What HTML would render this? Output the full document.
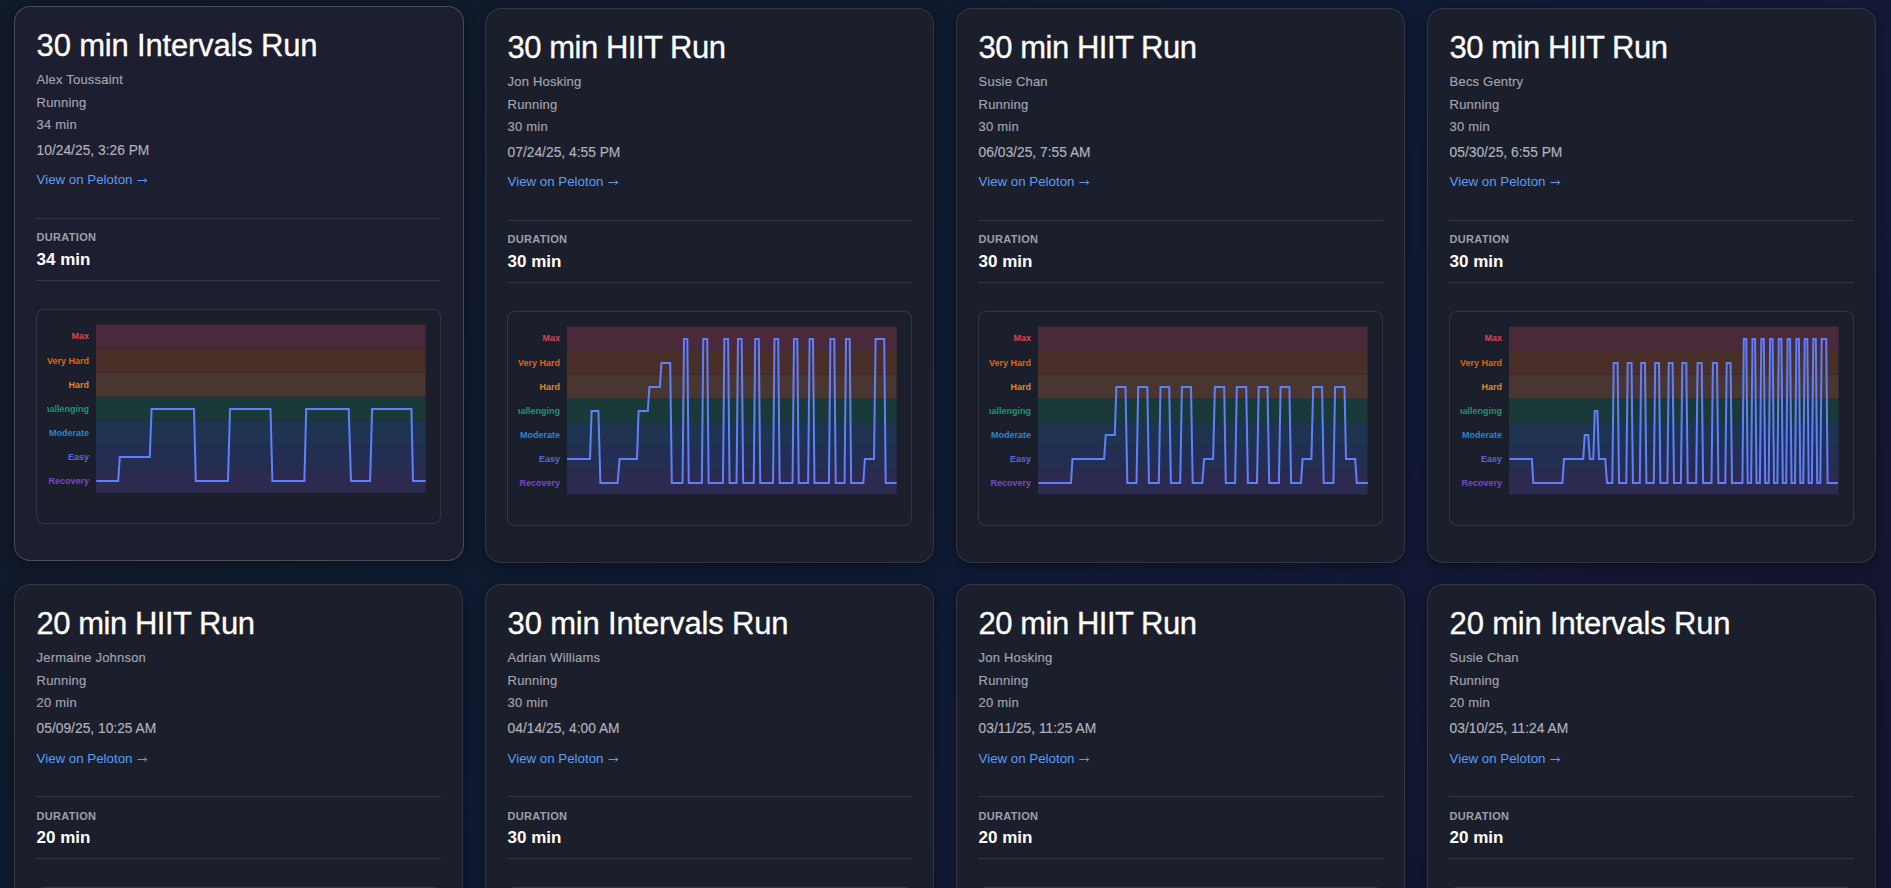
<!DOCTYPE html><html><head><meta charset="utf-8"><style>
*{margin:0;padding:0;box-sizing:border-box}
html,body{width:1891px;height:888px;overflow:hidden}
body{background:linear-gradient(135deg,#111a2b 0%,#111a2c 20%,#0f1a33 52%,#131937 68%,#15142e 100%);font-family:"Liberation Sans",sans-serif;position:relative}
.card{position:absolute;width:449px;height:555px;background:#1b1f2c;border:1px solid rgba(255,255,255,0.1);border-radius:16px;box-shadow:0 4px 14px rgba(0,0,0,0.35)}
.card.hov{width:450px;background:#1d1e2f;border-color:rgba(255,255,255,0.2)}
.card>div{position:absolute;left:21.6px;white-space:nowrap}
.ttl{font-size:31px;line-height:31px;color:#fff;-webkit-text-stroke:0.3px #fff;letter-spacing:-0.45px}
.sub{font-size:13px;line-height:13px;color:#a3a6b0;letter-spacing:0.2px;-webkit-text-stroke:0.15px #a3a6b0}
.date{font-size:13.8px;line-height:13.8px;color:#b0b3bc;-webkit-text-stroke:0.15px #b0b3bc}
.lnk{font-size:13.3px;line-height:13.3px;color:#5b9cf6}
.arr{position:absolute;top:169px}
.lbl{font-size:11px;line-height:11px;color:#9ca0ab;font-weight:700;letter-spacing:0.3px}
.val{font-size:17px;line-height:17px;color:#fff;font-weight:700}
.card>div.hr{left:21px;width:405px;height:1px;background:rgba(255,255,255,0.1)}
.card>div.cbox{left:21px;top:302px;width:405px;height:215px;border:1px solid rgba(255,255,255,0.1);border-radius:8px;background:#1b1f2c}
.csvg{position:absolute;left:-1px;top:-1px}
</style></head><body><div class="card hov" style="left:14px;top:6px"><div class="ttl" style="letter-spacing:-0.18px;top:23.46px">30 min Intervals Run</div><div class="sub" style="top:66.00px">Alex Toussaint</div><div class="sub" style="top:88.60px">Running</div><div class="sub" style="top:111.00px">34 min</div><div class="date" style="top:137.22px">10/24/25, 3:26 PM</div><div class="lnk" style="top:165.74px">View on Peloton</div><svg class="arr" style="top:169px;left:121.5px" width="12" height="8" viewBox="0 0 12 8"><path d="M0.4 4.5H9.6M7.5 2.3L9.7 4.5L7.5 6.7" fill="none" stroke="#5b9cf6" stroke-width="1"/></svg><div class="hr" style="top:211px"></div><div class="lbl" style="top:224.89px">DURATION</div><div class="val" style="top:243.91px">34 min</div><div class="hr" style="top:273px"></div><div class="cbox"></div><svg class="csvg" width="449" height="555" viewBox="0 0 449 555"><defs><clipPath id="cl0"><rect x="33" y="300" width="380" height="220"/></clipPath></defs><g clip-path="url(#cl0)" font-family="Liberation Sans" font-weight="700" font-size="9"><rect x="82" y="462.5" width="329.6" height="24" fill="#2c2a4e"/><rect x="82" y="438.5" width="329.6" height="24" fill="#242e52"/><rect x="82" y="414.5" width="329.6" height="24" fill="#1e3450"/><rect x="82" y="390.5" width="329.6" height="24" fill="#1a3a3a"/><rect x="82" y="366.5" width="329.6" height="24" fill="#4a3630"/><rect x="82" y="342.5" width="329.6" height="24" fill="#4a2e28"/><rect x="82" y="318.5" width="329.6" height="24" fill="#4a2a3a"/><text x="75" y="477.7" fill="#7747cc" text-anchor="end">Recovery</text><text x="75" y="453.7" fill="#5666dc" text-anchor="end">Easy</text><text x="75" y="429.7" fill="#2a84d2" text-anchor="end">Moderate</text><text x="75" y="405.7" fill="#16996c" text-anchor="end">Challenging</text><text x="75" y="381.7" fill="#de8a2a" text-anchor="end">Hard</text><text x="75" y="357.7" fill="#df660f" text-anchor="end">Very Hard</text><text x="75" y="333.0" fill="#da4452" text-anchor="end">Max</text><polyline points="82.20,475.00 104.20,475.00 105.80,451.00 135.80,451.00 137.60,403.00 180.00,403.00 181.80,475.00 214.00,475.00 216.00,403.00 256.50,403.00 258.40,475.00 290.40,475.00 292.20,403.00 334.70,403.00 337.00,475.00 356.10,475.00 358.10,403.00 397.40,403.00 399.00,475.00 411.80,475.00" fill="none" stroke="#5f80fc" stroke-width="2" stroke-linejoin="miter"/></g></svg></div><div class="card" style="left:485px;top:8px"><div class="ttl" style="letter-spacing:-0.48px;top:23.46px">30 min HIIT Run</div><div class="sub" style="top:66.00px">Jon Hosking</div><div class="sub" style="top:88.60px">Running</div><div class="sub" style="top:111.00px">30 min</div><div class="date" style="top:137.22px">07/24/25, 4:55 PM</div><div class="lnk" style="top:165.74px">View on Peloton</div><svg class="arr" style="top:169px;left:121.5px" width="12" height="8" viewBox="0 0 12 8"><path d="M0.4 4.5H9.6M7.5 2.3L9.7 4.5L7.5 6.7" fill="none" stroke="#5b9cf6" stroke-width="1"/></svg><div class="hr" style="top:211px"></div><div class="lbl" style="top:224.89px">DURATION</div><div class="val" style="top:243.91px">30 min</div><div class="hr" style="top:273px"></div><div class="cbox"></div><svg class="csvg" width="449" height="555" viewBox="0 0 449 555"><defs><clipPath id="cl1"><rect x="33" y="300" width="380" height="220"/></clipPath></defs><g clip-path="url(#cl1)" font-family="Liberation Sans" font-weight="700" font-size="9"><rect x="82" y="462.5" width="329.6" height="24" fill="#2c2a4e"/><rect x="82" y="438.5" width="329.6" height="24" fill="#242e52"/><rect x="82" y="414.5" width="329.6" height="24" fill="#1e3450"/><rect x="82" y="390.5" width="329.6" height="24" fill="#1a3a3a"/><rect x="82" y="366.5" width="329.6" height="24" fill="#4a3630"/><rect x="82" y="342.5" width="329.6" height="24" fill="#4a2e28"/><rect x="82" y="318.5" width="329.6" height="24" fill="#4a2a3a"/><text x="75" y="477.7" fill="#7747cc" text-anchor="end">Recovery</text><text x="75" y="453.7" fill="#5666dc" text-anchor="end">Easy</text><text x="75" y="429.7" fill="#2a84d2" text-anchor="end">Moderate</text><text x="75" y="405.7" fill="#16996c" text-anchor="end">Challenging</text><text x="75" y="381.7" fill="#de8a2a" text-anchor="end">Hard</text><text x="75" y="357.7" fill="#df660f" text-anchor="end">Very Hard</text><text x="75" y="333.0" fill="#da4452" text-anchor="end">Max</text><polyline points="82.00,451.00 105.00,451.00 106.60,403.00 113.40,403.00 115.40,475.00 132.60,475.00 134.60,451.00 152.00,451.00 153.60,403.00 162.80,403.00 164.40,379.00 174.90,379.00 176.40,355.00 185.20,355.00 186.80,475.00 197.55,475.00 199.00,331.00 202.30,331.00 203.75,475.00 216.85,475.00 218.30,331.00 222.20,331.00 223.65,475.00 237.95,475.00 239.40,331.00 243.10,331.00 244.55,475.00 251.55,475.00 253.00,331.00 256.70,331.00 258.15,475.00 268.75,475.00 270.20,331.00 273.80,331.00 275.25,475.00 288.05,475.00 289.50,331.00 293.20,331.00 294.65,475.00 307.55,475.00 309.00,331.00 312.30,331.00 313.75,475.00 323.15,475.00 324.60,331.00 328.00,331.00 329.45,475.00 343.95,475.00 345.40,331.00 349.30,331.00 350.75,475.00 359.55,475.00 361.00,331.00 364.70,331.00 366.15,475.00 378.30,475.00 379.90,451.00 389.00,451.00 390.60,331.00 399.20,331.00 400.70,475.00 411.60,475.00" fill="none" stroke="#5f80fc" stroke-width="2" stroke-linejoin="miter"/></g></svg></div><div class="card" style="left:956px;top:8px"><div class="ttl" style="letter-spacing:-0.48px;top:23.46px">30 min HIIT Run</div><div class="sub" style="top:66.00px">Susie Chan</div><div class="sub" style="top:88.60px">Running</div><div class="sub" style="top:111.00px">30 min</div><div class="date" style="top:137.22px">06/03/25, 7:55 AM</div><div class="lnk" style="top:165.74px">View on Peloton</div><svg class="arr" style="top:169px;left:121.5px" width="12" height="8" viewBox="0 0 12 8"><path d="M0.4 4.5H9.6M7.5 2.3L9.7 4.5L7.5 6.7" fill="none" stroke="#5b9cf6" stroke-width="1"/></svg><div class="hr" style="top:211px"></div><div class="lbl" style="top:224.89px">DURATION</div><div class="val" style="top:243.91px">30 min</div><div class="hr" style="top:273px"></div><div class="cbox"></div><svg class="csvg" width="449" height="555" viewBox="0 0 449 555"><defs><clipPath id="cl2"><rect x="33" y="300" width="380" height="220"/></clipPath></defs><g clip-path="url(#cl2)" font-family="Liberation Sans" font-weight="700" font-size="9"><rect x="82" y="462.5" width="329.6" height="24" fill="#2c2a4e"/><rect x="82" y="438.5" width="329.6" height="24" fill="#242e52"/><rect x="82" y="414.5" width="329.6" height="24" fill="#1e3450"/><rect x="82" y="390.5" width="329.6" height="24" fill="#1a3a3a"/><rect x="82" y="366.5" width="329.6" height="24" fill="#4a3630"/><rect x="82" y="342.5" width="329.6" height="24" fill="#4a2e28"/><rect x="82" y="318.5" width="329.6" height="24" fill="#4a2a3a"/><text x="75" y="477.7" fill="#7747cc" text-anchor="end">Recovery</text><text x="75" y="453.7" fill="#5666dc" text-anchor="end">Easy</text><text x="75" y="429.7" fill="#2a84d2" text-anchor="end">Moderate</text><text x="75" y="405.7" fill="#16996c" text-anchor="end">Challenging</text><text x="75" y="381.7" fill="#de8a2a" text-anchor="end">Hard</text><text x="75" y="357.7" fill="#df660f" text-anchor="end">Very Hard</text><text x="75" y="333.0" fill="#da4452" text-anchor="end">Max</text><polyline points="82.30,475.00 115.00,475.00 116.50,451.00 148.10,451.00 149.70,427.00 158.80,427.00 160.40,379.00 169.50,379.00 171.30,475.00 180.50,475.00 182.20,379.00 191.30,379.00 193.00,475.00 202.80,475.00 204.50,379.00 213.20,379.00 214.90,475.00 224.20,475.00 225.90,379.00 235.00,379.00 236.70,475.00 246.30,475.00 248.10,451.00 257.10,451.00 258.90,379.00 268.20,379.00 269.80,475.00 279.10,475.00 280.80,379.00 290.20,379.00 291.90,475.00 301.00,475.00 302.70,379.00 311.50,379.00 313.20,475.00 322.90,475.00 324.60,379.00 333.40,379.00 335.10,475.00 345.00,475.00 346.60,451.00 355.40,451.00 357.20,379.00 366.10,379.00 367.70,475.00 377.40,475.00 379.10,379.00 388.50,379.00 390.00,451.00 399.20,451.00 400.80,475.00 411.90,475.00" fill="none" stroke="#5f80fc" stroke-width="2" stroke-linejoin="miter"/></g></svg></div><div class="card" style="left:1427px;top:8px"><div class="ttl" style="letter-spacing:-0.48px;top:23.46px">30 min HIIT Run</div><div class="sub" style="top:66.00px">Becs Gentry</div><div class="sub" style="top:88.60px">Running</div><div class="sub" style="top:111.00px">30 min</div><div class="date" style="top:137.22px">05/30/25, 6:55 PM</div><div class="lnk" style="top:165.74px">View on Peloton</div><svg class="arr" style="top:169px;left:121.5px" width="12" height="8" viewBox="0 0 12 8"><path d="M0.4 4.5H9.6M7.5 2.3L9.7 4.5L7.5 6.7" fill="none" stroke="#5b9cf6" stroke-width="1"/></svg><div class="hr" style="top:211px"></div><div class="lbl" style="top:224.89px">DURATION</div><div class="val" style="top:243.91px">30 min</div><div class="hr" style="top:273px"></div><div class="cbox"></div><svg class="csvg" width="449" height="555" viewBox="0 0 449 555"><defs><clipPath id="cl3"><rect x="33" y="300" width="380" height="220"/></clipPath></defs><g clip-path="url(#cl3)" font-family="Liberation Sans" font-weight="700" font-size="9"><rect x="82" y="462.5" width="329.6" height="24" fill="#2c2a4e"/><rect x="82" y="438.5" width="329.6" height="24" fill="#242e52"/><rect x="82" y="414.5" width="329.6" height="24" fill="#1e3450"/><rect x="82" y="390.5" width="329.6" height="24" fill="#1a3a3a"/><rect x="82" y="366.5" width="329.6" height="24" fill="#4a3630"/><rect x="82" y="342.5" width="329.6" height="24" fill="#4a2e28"/><rect x="82" y="318.5" width="329.6" height="24" fill="#4a2a3a"/><text x="75" y="477.7" fill="#7747cc" text-anchor="end">Recovery</text><text x="75" y="453.7" fill="#5666dc" text-anchor="end">Easy</text><text x="75" y="429.7" fill="#2a84d2" text-anchor="end">Moderate</text><text x="75" y="405.7" fill="#16996c" text-anchor="end">Challenging</text><text x="75" y="381.7" fill="#de8a2a" text-anchor="end">Hard</text><text x="75" y="357.7" fill="#df660f" text-anchor="end">Very Hard</text><text x="75" y="333.0" fill="#da4452" text-anchor="end">Max</text><polyline points="82.30,451.00 104.90,451.00 106.30,475.00 135.40,475.00 137.00,451.00 156.20,451.00 157.70,427.00 161.20,427.00 162.80,451.00 166.30,451.00 167.80,403.00 170.40,403.00 171.90,451.00 178.30,451.00 180.00,475.00 185.30,475.00 186.70,355.00 190.60,355.00 192.00,475.00 199.30,475.00 200.70,355.00 204.50,355.00 205.90,475.00 212.80,475.00 214.20,355.00 218.00,355.00 219.40,475.00 226.80,475.00 228.20,355.00 232.00,355.00 233.40,475.00 240.40,475.00 241.80,355.00 245.60,355.00 247.00,475.00 253.90,475.00 255.30,355.00 259.30,355.00 260.70,475.00 269.20,475.00 270.60,355.00 274.70,355.00 276.10,475.00 284.50,475.00 285.90,355.00 290.00,355.00 291.40,475.00 298.30,475.00 299.70,355.00 303.60,355.00 305.00,475.00 315.40,475.00 316.80,331.00 319.30,331.00 320.70,475.00 324.10,475.00 325.50,331.00 328.10,331.00 329.50,475.00 332.90,475.00 334.30,331.00 336.80,331.00 338.20,475.00 341.70,475.00 343.10,331.00 345.60,331.00 347.00,475.00 350.40,475.00 351.80,331.00 354.40,331.00 355.80,475.00 359.20,475.00 360.60,331.00 363.10,331.00 364.50,475.00 368.00,475.00 369.40,331.00 371.90,331.00 373.30,475.00 376.30,475.00 377.70,331.00 380.30,331.00 381.70,475.00 384.90,475.00 386.30,331.00 388.80,331.00 390.20,475.00 393.30,475.00 394.70,331.00 399.20,331.00 400.60,475.00 410.90,475.00" fill="none" stroke="#5f80fc" stroke-width="2" stroke-linejoin="miter"/></g></svg></div><div class="card" style="left:14px;top:584px"><div class="ttl" style="letter-spacing:-0.48px;top:23.46px">20 min HIIT Run</div><div class="sub" style="top:66.00px">Jermaine Johnson</div><div class="sub" style="top:88.60px">Running</div><div class="sub" style="top:111.00px">20 min</div><div class="date" style="top:137.22px">05/09/25, 10:25 AM</div><div class="lnk" style="top:166.74px">View on Peloton</div><svg class="arr" style="top:170px;left:121.5px" width="12" height="8" viewBox="0 0 12 8"><path d="M0.4 4.5H9.6M7.5 2.3L9.7 4.5L7.5 6.7" fill="none" stroke="#5b9cf6" stroke-width="1"/></svg><div class="hr" style="top:211px"></div><div class="lbl" style="top:225.89px">DURATION</div><div class="val" style="top:243.91px">20 min</div><div class="hr" style="top:273px"></div><div class="cbox"></div><svg class="csvg" width="449" height="555" viewBox="0 0 449 555"><defs><clipPath id="cl4"><rect x="33" y="300" width="380" height="220"/></clipPath></defs><g clip-path="url(#cl4)" font-family="Liberation Sans" font-weight="700" font-size="9"><rect x="82" y="462.5" width="329.6" height="24" fill="#2c2a4e"/><rect x="82" y="438.5" width="329.6" height="24" fill="#242e52"/><rect x="82" y="414.5" width="329.6" height="24" fill="#1e3450"/><rect x="82" y="390.5" width="329.6" height="24" fill="#1a3a3a"/><rect x="82" y="366.5" width="329.6" height="24" fill="#4a3630"/><rect x="82" y="342.5" width="329.6" height="24" fill="#4a2e28"/><rect x="82" y="318.5" width="329.6" height="24" fill="#4a2a3a"/><text x="75" y="477.7" fill="#7747cc" text-anchor="end">Recovery</text><text x="75" y="453.7" fill="#5666dc" text-anchor="end">Easy</text><text x="75" y="429.7" fill="#2a84d2" text-anchor="end">Moderate</text><text x="75" y="405.7" fill="#16996c" text-anchor="end">Challenging</text><text x="75" y="381.7" fill="#de8a2a" text-anchor="end">Hard</text><text x="75" y="357.7" fill="#df660f" text-anchor="end">Very Hard</text><text x="75" y="333.0" fill="#da4452" text-anchor="end">Max</text></g></svg></div><div class="card" style="left:485px;top:584px"><div class="ttl" style="letter-spacing:-0.18px;top:23.46px">30 min Intervals Run</div><div class="sub" style="top:66.00px">Adrian Williams</div><div class="sub" style="top:88.60px">Running</div><div class="sub" style="top:111.00px">30 min</div><div class="date" style="top:137.22px">04/14/25, 4:00 AM</div><div class="lnk" style="top:166.74px">View on Peloton</div><svg class="arr" style="top:170px;left:121.5px" width="12" height="8" viewBox="0 0 12 8"><path d="M0.4 4.5H9.6M7.5 2.3L9.7 4.5L7.5 6.7" fill="none" stroke="#5b9cf6" stroke-width="1"/></svg><div class="hr" style="top:211px"></div><div class="lbl" style="top:225.89px">DURATION</div><div class="val" style="top:243.91px">30 min</div><div class="hr" style="top:273px"></div><div class="cbox"></div><svg class="csvg" width="449" height="555" viewBox="0 0 449 555"><defs><clipPath id="cl5"><rect x="33" y="300" width="380" height="220"/></clipPath></defs><g clip-path="url(#cl5)" font-family="Liberation Sans" font-weight="700" font-size="9"><rect x="82" y="462.5" width="329.6" height="24" fill="#2c2a4e"/><rect x="82" y="438.5" width="329.6" height="24" fill="#242e52"/><rect x="82" y="414.5" width="329.6" height="24" fill="#1e3450"/><rect x="82" y="390.5" width="329.6" height="24" fill="#1a3a3a"/><rect x="82" y="366.5" width="329.6" height="24" fill="#4a3630"/><rect x="82" y="342.5" width="329.6" height="24" fill="#4a2e28"/><rect x="82" y="318.5" width="329.6" height="24" fill="#4a2a3a"/><text x="75" y="477.7" fill="#7747cc" text-anchor="end">Recovery</text><text x="75" y="453.7" fill="#5666dc" text-anchor="end">Easy</text><text x="75" y="429.7" fill="#2a84d2" text-anchor="end">Moderate</text><text x="75" y="405.7" fill="#16996c" text-anchor="end">Challenging</text><text x="75" y="381.7" fill="#de8a2a" text-anchor="end">Hard</text><text x="75" y="357.7" fill="#df660f" text-anchor="end">Very Hard</text><text x="75" y="333.0" fill="#da4452" text-anchor="end">Max</text></g></svg></div><div class="card" style="left:956px;top:584px"><div class="ttl" style="letter-spacing:-0.48px;top:23.46px">20 min HIIT Run</div><div class="sub" style="top:66.00px">Jon Hosking</div><div class="sub" style="top:88.60px">Running</div><div class="sub" style="top:111.00px">20 min</div><div class="date" style="top:137.22px">03/11/25, 11:25 AM</div><div class="lnk" style="top:166.74px">View on Peloton</div><svg class="arr" style="top:170px;left:121.5px" width="12" height="8" viewBox="0 0 12 8"><path d="M0.4 4.5H9.6M7.5 2.3L9.7 4.5L7.5 6.7" fill="none" stroke="#5b9cf6" stroke-width="1"/></svg><div class="hr" style="top:211px"></div><div class="lbl" style="top:225.89px">DURATION</div><div class="val" style="top:243.91px">20 min</div><div class="hr" style="top:273px"></div><div class="cbox"></div><svg class="csvg" width="449" height="555" viewBox="0 0 449 555"><defs><clipPath id="cl6"><rect x="33" y="300" width="380" height="220"/></clipPath></defs><g clip-path="url(#cl6)" font-family="Liberation Sans" font-weight="700" font-size="9"><rect x="82" y="462.5" width="329.6" height="24" fill="#2c2a4e"/><rect x="82" y="438.5" width="329.6" height="24" fill="#242e52"/><rect x="82" y="414.5" width="329.6" height="24" fill="#1e3450"/><rect x="82" y="390.5" width="329.6" height="24" fill="#1a3a3a"/><rect x="82" y="366.5" width="329.6" height="24" fill="#4a3630"/><rect x="82" y="342.5" width="329.6" height="24" fill="#4a2e28"/><rect x="82" y="318.5" width="329.6" height="24" fill="#4a2a3a"/><text x="75" y="477.7" fill="#7747cc" text-anchor="end">Recovery</text><text x="75" y="453.7" fill="#5666dc" text-anchor="end">Easy</text><text x="75" y="429.7" fill="#2a84d2" text-anchor="end">Moderate</text><text x="75" y="405.7" fill="#16996c" text-anchor="end">Challenging</text><text x="75" y="381.7" fill="#de8a2a" text-anchor="end">Hard</text><text x="75" y="357.7" fill="#df660f" text-anchor="end">Very Hard</text><text x="75" y="333.0" fill="#da4452" text-anchor="end">Max</text></g></svg></div><div class="card" style="left:1427px;top:584px"><div class="ttl" style="letter-spacing:-0.18px;top:23.46px">20 min Intervals Run</div><div class="sub" style="top:66.00px">Susie Chan</div><div class="sub" style="top:88.60px">Running</div><div class="sub" style="top:111.00px">20 min</div><div class="date" style="top:137.22px">03/10/25, 11:24 AM</div><div class="lnk" style="top:166.74px">View on Peloton</div><svg class="arr" style="top:170px;left:121.5px" width="12" height="8" viewBox="0 0 12 8"><path d="M0.4 4.5H9.6M7.5 2.3L9.7 4.5L7.5 6.7" fill="none" stroke="#5b9cf6" stroke-width="1"/></svg><div class="hr" style="top:211px"></div><div class="lbl" style="top:225.89px">DURATION</div><div class="val" style="top:243.91px">20 min</div><div class="hr" style="top:273px"></div><div class="cbox"></div><svg class="csvg" width="449" height="555" viewBox="0 0 449 555"><defs><clipPath id="cl7"><rect x="33" y="300" width="380" height="220"/></clipPath></defs><g clip-path="url(#cl7)" font-family="Liberation Sans" font-weight="700" font-size="9"><rect x="82" y="462.5" width="329.6" height="24" fill="#2c2a4e"/><rect x="82" y="438.5" width="329.6" height="24" fill="#242e52"/><rect x="82" y="414.5" width="329.6" height="24" fill="#1e3450"/><rect x="82" y="390.5" width="329.6" height="24" fill="#1a3a3a"/><rect x="82" y="366.5" width="329.6" height="24" fill="#4a3630"/><rect x="82" y="342.5" width="329.6" height="24" fill="#4a2e28"/><rect x="82" y="318.5" width="329.6" height="24" fill="#4a2a3a"/><text x="75" y="477.7" fill="#7747cc" text-anchor="end">Recovery</text><text x="75" y="453.7" fill="#5666dc" text-anchor="end">Easy</text><text x="75" y="429.7" fill="#2a84d2" text-anchor="end">Moderate</text><text x="75" y="405.7" fill="#16996c" text-anchor="end">Challenging</text><text x="75" y="381.7" fill="#de8a2a" text-anchor="end">Hard</text><text x="75" y="357.7" fill="#df660f" text-anchor="end">Very Hard</text><text x="75" y="333.0" fill="#da4452" text-anchor="end">Max</text></g></svg></div></body></html>
